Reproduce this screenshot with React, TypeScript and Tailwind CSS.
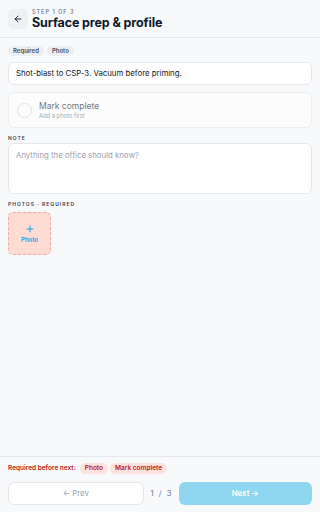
import { ArrowLeft, Plus } from "lucide-react";

export default function App() {
  return (
    <div className="flex h-[512px] w-[320px] flex-col overflow-hidden bg-[#f8f9fb] font-['Inter',sans-serif] text-[#0f172a]">
      <header className="flex h-[38px] shrink-0 items-center gap-[4px] border-b border-[#e4e7ed] px-2">
        <button
          type="button"
          className="flex h-5 w-5 items-center justify-center rounded-[5px] bg-[#eef0f4] text-[#111827]"
        >
          <ArrowLeft className="h-[10px] w-[10px]" strokeWidth={2.2} />
        </button>
        <div className="flex flex-col">
          <span className="text-[5.5px] font-medium leading-[8px] tracking-[0.18em] text-[#6b7280]">
            STEP 1 OF 3
          </span>
          <h1 className="text-[12.5px] font-bold leading-[14px] tracking-[-0.01em]">
            Surface prep &amp; profile
          </h1>
        </div>
      </header>

      <main className="flex flex-1 flex-col px-2 pt-[8px]">
        <div className="flex gap-[3px]">
          <span className="rounded-full bg-[#eceef2] px-[5px] text-[6px] font-semibold leading-[10px] text-[#4b5563]">
            Required
          </span>
          <span className="rounded-full bg-[#eceef2] px-[5px] text-[6px] font-semibold leading-[10px] text-[#4b5563]">
            Photo
          </span>
        </div>

        <div className="mt-[6px] flex h-[23px] items-center rounded-[6px] border border-[#e5e7eb] bg-white px-[7px] text-[7.8px] text-[#111827]">
          Shot-blast to CSP-3. Vacuum before priming.
        </div>

        <div className="mt-[7px] flex h-[36px] items-center gap-[7px] rounded-[6px] border border-[#e5e7eb] bg-white px-[8px] opacity-60">
          <span className="h-[15px] w-[15px] rounded-full border border-[#d1d5db] bg-white" />
          <div className="flex flex-col">
            <span className="text-[8.5px] leading-[11px] text-[#111827]">Mark complete</span>
            <span className="text-[5.8px] leading-[8px] text-[#6b7280]">Add a photo first</span>
          </div>
        </div>

        <p className="mt-[7px] text-[5px] font-semibold leading-[7px] tracking-[0.2em] text-[#374151]">
          NOTE
        </p>
        <textarea
          placeholder="Anything the office should know?"
          className="mt-[1px] h-[51px] resize-none rounded-[6px] border border-[#e5e7eb] bg-white px-[7px] py-[6px] text-[7.8px] text-[#111827] outline-none placeholder:text-[#9ca3af]"
        />

        <p className="mt-[7px] text-[5px] font-semibold leading-[7px] tracking-[0.2em] text-[#374151]">
          PHOTOS · REQUIRED
        </p>
        <button
          type="button"
          className="mt-[4px] flex h-[43px] w-[43px] flex-col items-center justify-center rounded-[5px] border border-dashed border-[#f2aaa0] bg-[#fedcd3] text-[#0ea5e9]"
        >
          <Plus className="h-[10px] w-[10px]" strokeWidth={2.4} />
          <span className="mt-[2px] text-[6px] font-semibold leading-[7px]">Photo</span>
        </button>
      </main>

      <footer className="shrink-0 border-t border-[#e4e7ed] px-2 pb-[7px] pt-[6px]">
        <div className="flex items-center gap-[2px]">
          <span className="mr-[2px] text-[6.5px] font-semibold text-[#b91c1c]">Required before next:</span>
          <span className="rounded-full bg-[#fee2e0] px-[5px] text-[6.5px] font-semibold leading-[11px] text-[#b91c1c]">
            Photo
          </span>
          <span className="rounded-full bg-[#fee2e0] px-[5px] text-[6.5px] font-semibold leading-[11px] text-[#b91c1c]">
            Mark complete
          </span>
        </div>
        <div className="mt-[8px] flex items-center gap-[7px]">
          <button
            type="button"
            className="flex h-[23px] flex-1 items-center justify-center rounded-[6px] border border-[#e5e7eb] bg-white text-[7.8px] text-[#9ca3af]"
          >
            ← Prev
          </button>
          <span className="flex w-[21px] justify-between text-[7.5px] text-[#6b7280]">
            <span>1</span>
            <span>/</span>
            <span>3</span>
          </span>
          <button
            type="button"
            className="flex h-[23px] flex-1 items-center justify-center rounded-[6px] bg-[#8fd7f0] text-[7.8px] font-semibold text-white"
          >
            Next →
          </button>
        </div>
      </footer>
    </div>
  );
}
